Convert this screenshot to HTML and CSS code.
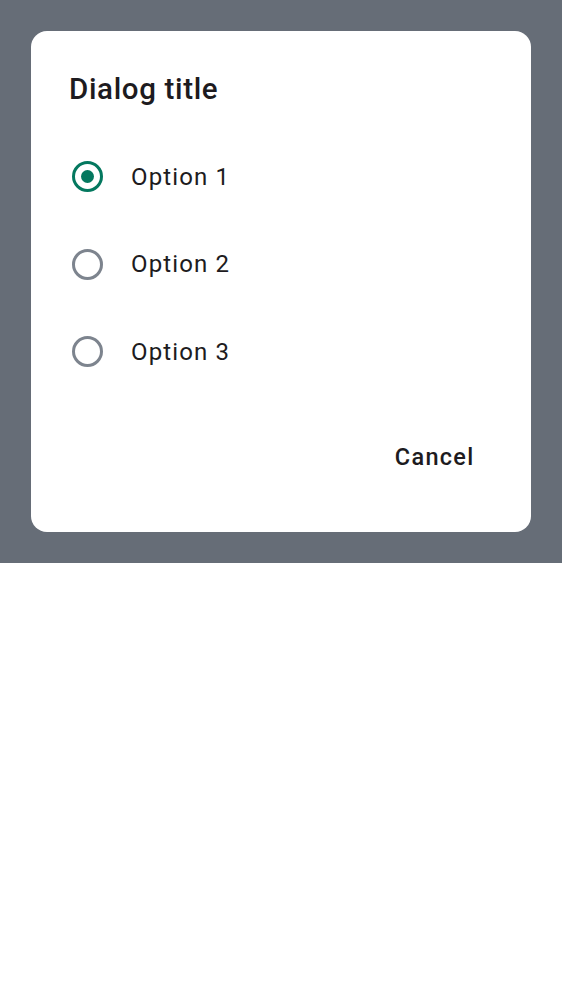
FILE: index.html
```html
<!DOCTYPE html>
<html>
<head>
<meta charset="utf-8">
<link rel="stylesheet" href="styles.css">
</head>
<body>
<div class="backdrop">
  <div class="dialog">
    <h1 class="title">Dialog title</h1>
    <div class="options">
      <label class="option">
        <span class="radio checked"><span class="dot"></span></span>
        <span class="label">Option 1</span>
      </label>
      <label class="option">
        <span class="radio"></span>
        <span class="label">Option 2</span>
      </label>
      <label class="option">
        <span class="radio"></span>
        <span class="label">Option 3</span>
      </label>
    </div>
    <div class="actions">
      <button class="btn">Cancel</button>
    </div>
  </div>
</div>
</body>
</html>
```
FILE: styles.css
```css
* { box-sizing: border-box; }
html, body { margin: 0; padding: 0; background: #ffffff; }
body { font-family: Roboto, "Noto Sans", sans-serif; color: #1c1b1f; }
.backdrop {
  background: #666d77;
  padding: 31px;
  height: 563px;
}
.dialog {
  background: #ffffff;
  border-radius: 16px;
  width: 500px;
  height: 501px;
  padding: 38px 38px 0 38px;
  display: flex;
  flex-direction: column;
}
.title {
  margin: 0;
  font-size: 29.5px;
  font-weight: 500;
  line-height: 40px;
  letter-spacing: 0.65px;
  color: #1d1b20;
}
.options {
  margin-top: 24px;
  display: flex;
  flex-direction: column;
}
.option {
  display: flex;
  align-items: center;
  height: 87.5px;
}
.radio {
  width: 31px;
  height: 31px;
  border: 3px solid #7d848e;
  border-radius: 50%;
  margin-left: 3px;
  display: flex;
  align-items: center;
  justify-content: center;
}
.radio.checked { border-color: #04785f; }
.dot {
  width: 13px;
  height: 13px;
  border-radius: 50%;
  background: #04785f;
}
.label {
  margin-left: 28px;
  font-size: 24px;
  letter-spacing: 1.15px;
  color: #1d1b20;
}
.actions {
  display: flex;
  justify-content: flex-end;
  margin-top: 37px;
}
.btn {
  font-family: Roboto, "Noto Sans", sans-serif;
  font-size: 23.5px;
  font-weight: 500;
  color: #1d1b20;
  background: none;
  border: none;
  padding: 10px 18.5px 10px 19px;
  letter-spacing: 1.3px;
}
```
